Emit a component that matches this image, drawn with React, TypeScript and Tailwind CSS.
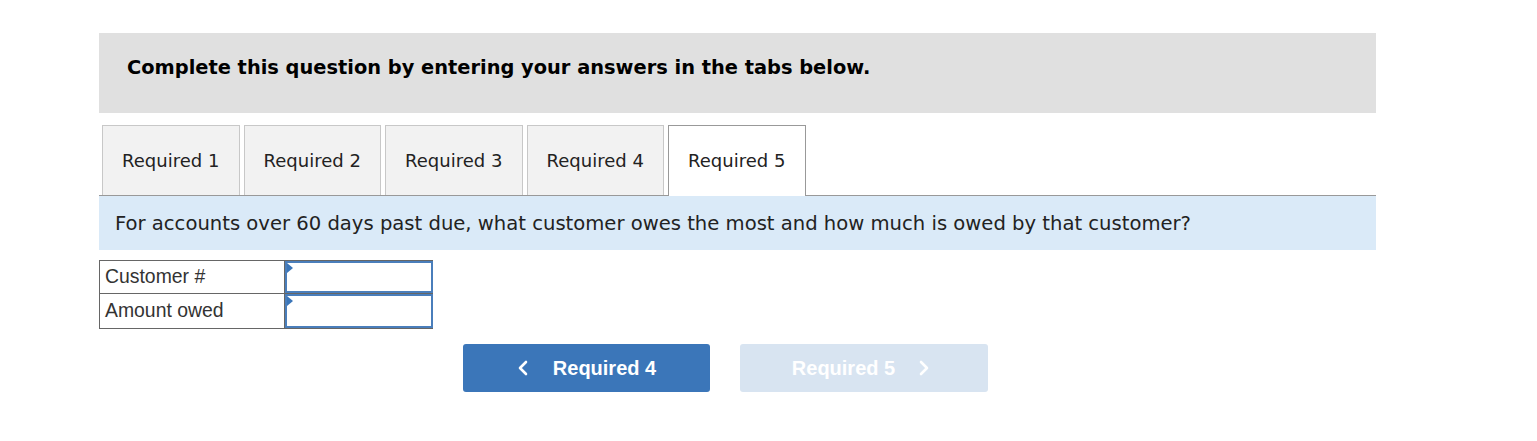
import { ChevronLeft, ChevronRight } from "lucide-react";

const tabs = ["Required 1", "Required 2", "Required 3", "Required 4", "Required 5"];

function AnswerInput() {
  return (
    <div className="relative h-full border-2 border-[#4a7ebb] bg-white">
      <span className="absolute left-0 top-0 h-0 w-0 border-y-[5px] border-l-[6px] border-y-transparent border-l-[#3b76b9]" />
    </div>
  );
}

export default function App() {
  return (
    <div className="min-h-screen bg-white pt-[33px] font-['Verdana','DejaVu_Sans',sans-serif] text-[#111]">
      <div className="w-[1277px] ml-[99px]">
        <div className="h-[80px] bg-[#e0e0e0] pl-[28px] pt-[20px]">
          <h2 className="text-[19.4px] font-bold text-black">
            Complete this question by entering your answers in the tabs below.
          </h2>
        </div>

        <div className="mt-[12px] flex gap-[4px] pl-[3px] border-b border-[#999]">
          {tabs.map((t, i) => {
            const active = i === 4;
            return (
              <div
                key={t}
                className={
                  active
                    ? "-mb-px flex h-[71px] w-[137.5px] items-center justify-center border border-b-0 border-[#999] bg-white pb-px text-[18px] text-[#222]"
                    : "flex h-[70px] w-[137.5px] items-center justify-center border border-b-0 border-[#c8c8c8] bg-[#f2f2f2] text-[18px] text-[#222]"
                }
              >
                {t}
              </div>
            );
          })}
        </div>

        <div className="flex h-[54px] items-center bg-[#daeaf8] pl-[16px] pt-[2px] text-[19.6px] text-[#222]">
          For accounts over 60 days past due, what customer owes the most and how much is owed by that customer?
        </div>

        <div className="mt-[10px] w-[334px] font-['Liberation_Sans',Arial,sans-serif] text-[19.4px] text-[#333]">
          <div className="grid h-[34px] grid-cols-[185px_148px] border border-[#666]">
            <div className="flex items-center border-r border-[#666] pl-[5px]">Customer #</div>
            <AnswerInput />
          </div>
          <div className="grid h-[35px] grid-cols-[185px_148px] border border-t-0 border-[#666]">
            <div className="flex items-center border-r border-[#666] pl-[5px]">Amount owed</div>
            <AnswerInput />
          </div>
        </div>

        <div className="mt-[15px] ml-[364px] flex gap-[30px] font-['Liberation_Sans',Arial,sans-serif]">
          <button className="flex h-[48px] w-[247px] items-center justify-center gap-[18px] rounded-[3px] bg-[#3b76b9] pr-[6px] text-[20px] font-bold text-white">
            <ChevronLeft size={24} strokeWidth={2.6} />
            <span>Required 4</span>
          </button>
          <button className="flex h-[48px] w-[248px] items-center justify-center gap-[17px] rounded-[3px] bg-[#d8e4f1] text-[20px] font-bold text-white">
            <span>Required 5</span>
            <ChevronRight size={24} strokeWidth={2.6} />
          </button>
        </div>
      </div>
    </div>
  );
}
